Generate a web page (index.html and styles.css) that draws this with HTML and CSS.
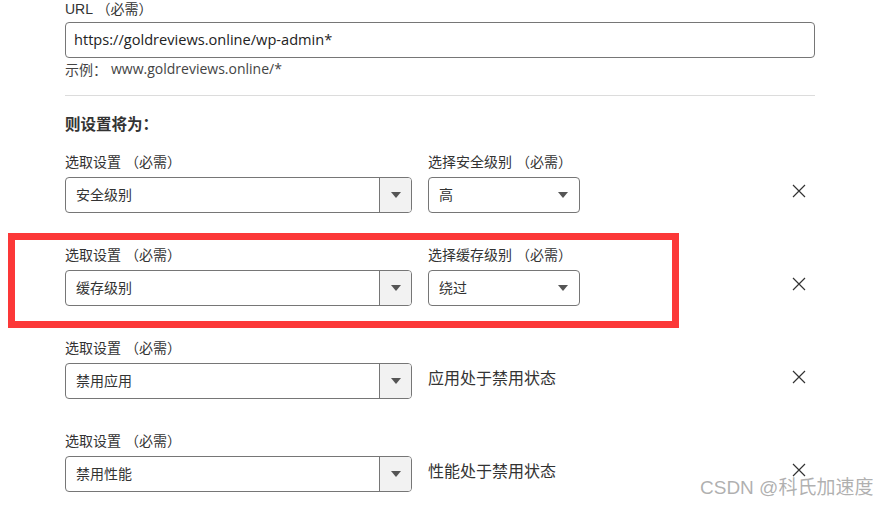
FILE: index.html
```html
<!DOCTYPE html>
<html lang="zh-CN">
<head>
<meta charset="utf-8">
<link rel="stylesheet" href="styles.css">
</head>
<body>
<div class="page">
  <div class="field-label">URL （必需）</div>
  <div class="input">https://goldreviews.online/wp-admin*</div>
  <div class="hint"><span class="hint-key">示例：</span>www.goldreviews.online/*</div>
  <div class="divider"></div>
  <div class="heading">则设置将为：</div>

  <div class="rule">
    <div class="col-setting">
      <div class="label">选取设置 （必需）</div>
      <div class="select-wide"><span class="value">安全级别</span><span class="arrow-box"><span class="tri"></span></span></div>
    </div>
    <div class="col-value">
      <div class="label">选择安全级别 （必需）</div>
      <div class="select-small"><span class="value">高</span><span class="tri"></span></div>
    </div>
    <div class="close"><svg width="14" height="14" viewBox="0 0 14 14"><path d="M1 1L13 13M13 1L1 13" stroke="#333" stroke-width="1.2" fill="none"/></svg></div>
  </div>

  <div class="rule">
    <div class="col-setting">
      <div class="label">选取设置 （必需）</div>
      <div class="select-wide"><span class="value">缓存级别</span><span class="arrow-box"><span class="tri"></span></span></div>
    </div>
    <div class="col-value">
      <div class="label">选择缓存级别 （必需）</div>
      <div class="select-small"><span class="value">绕过</span><span class="tri"></span></div>
    </div>
    <div class="close"><svg width="14" height="14" viewBox="0 0 14 14"><path d="M1 1L13 13M13 1L1 13" stroke="#333" stroke-width="1.2" fill="none"/></svg></div>
  </div>

  <div class="rule">
    <div class="col-setting">
      <div class="label">选取设置 （必需）</div>
      <div class="select-wide"><span class="value">禁用应用</span><span class="arrow-box"><span class="tri"></span></span></div>
    </div>
    <div class="col-value">
      <div class="label">&nbsp;</div>
      <div class="status">应用处于禁用状态</div>
    </div>
    <div class="close"><svg width="14" height="14" viewBox="0 0 14 14"><path d="M1 1L13 13M13 1L1 13" stroke="#333" stroke-width="1.2" fill="none"/></svg></div>
  </div>

  <div class="rule">
    <div class="col-setting">
      <div class="label">选取设置 （必需）</div>
      <div class="select-wide"><span class="value">禁用性能</span><span class="arrow-box"><span class="tri"></span></span></div>
    </div>
    <div class="col-value">
      <div class="label">&nbsp;</div>
      <div class="status">性能处于禁用状态</div>
    </div>
    <div class="close"><svg width="14" height="14" viewBox="0 0 14 14"><path d="M1 1L13 13M13 1L1 13" stroke="#333" stroke-width="1.2" fill="none"/></svg></div>
  </div>
</div>
<div class="highlight"></div>
<div class="watermark">CSDN @科氏加速度</div>
</body>
</html>
```
FILE: styles.css
```css
html, body {
  margin: 0;
  padding: 0;
  background: #fff;
}
body {
  width: 886px;
  height: 507px;
  overflow: hidden;
  position: relative;
  font-family: "Liberation Sans", "Noto Sans CJK SC", sans-serif;
  color: #333;
}
.page {
  margin-left: 65px;
  width: 750px;
}
.field-label {
  font-size: 14px;
  line-height: 18px;
  height: 18px;
  margin-bottom: 4px;
  color: #333;
}
.input {
  box-sizing: border-box;
  height: 36px;
  border: 1px solid #767676;
  border-radius: 4px;
  padding-left: 8px;
  font-family: "Open Sans", "Liberation Sans", sans-serif;
  font-size: 14.6px;
  line-height: 33px;
  color: #222;
}
.hint {
  margin-top: 2px;
  font-family: "Open Sans", "Noto Sans CJK SC", sans-serif;
  font-size: 14px;
  line-height: 18px;
  color: #444;
  display: flex;
}
.hint-key {
  font-family: "Noto Sans CJK SC", sans-serif;
  margin-right: 4px;
}
.divider {
  margin-top: 17px;
  height: 1px;
  background: #dcdcdc;
}
.heading {
  margin-top: 18px;
  font-size: 15.5px;
  line-height: 22px;
  font-weight: bold;
  color: #333;
}
.rule {
  display: flex;
  align-items: flex-start;
  margin-top: 16px;
  height: 61px;
  margin-bottom: 32px;
}
.rule + .rule {
  margin-top: 0;
}
.label {
  font-size: 14px;
  line-height: 20px;
  height: 20px;
  margin-bottom: 5px;
  color: #333;
  white-space: nowrap;
}
.col-setting {
  width: 347px;
}
.col-value {
  margin-left: 16px;
  width: 300px;
}
.select-wide, .select-small {
  box-sizing: border-box;
  height: 36px;
  border: 1px solid #767676;
  border-radius: 4px;
  display: flex;
  align-items: center;
  overflow: hidden;
}
.select-small {
  width: 152px;
  justify-content: space-between;
  padding-right: 11px;
}
.value {
  flex: 1;
  padding-left: 10px;
  padding-bottom: 2px;
  font-size: 14px;
  color: #333;
}
.arrow-box {
  width: 31px;
  height: 100%;
  border-left: 1px solid #767676;
  background: #f2f2f2;
  display: flex;
  align-items: center;
  justify-content: center;
}
.tri {
  width: 0;
  height: 0;
  border-left: 5px solid transparent;
  border-right: 5px solid transparent;
  border-top: 6px solid #555;
}
.status {
  height: 36px;
  line-height: 31px;
  font-size: 16px;
  color: #333;
}
.close {
  margin-left: auto;
  margin-right: 9px;
  margin-top: 32px;
  width: 14px;
  height: 14px;
  display: flex;
}
.highlight {
  position: absolute;
  left: 8px;
  top: 233px;
  width: 657px;
  height: 81px;
  border: 7px solid #fc3838;
}
.watermark {
  position: absolute;
  left: 700px;
  top: 477px;
  font-size: 19px;
  line-height: 22px;
  color: rgba(150, 150, 150, 0.75);
  white-space: nowrap;
}
```
